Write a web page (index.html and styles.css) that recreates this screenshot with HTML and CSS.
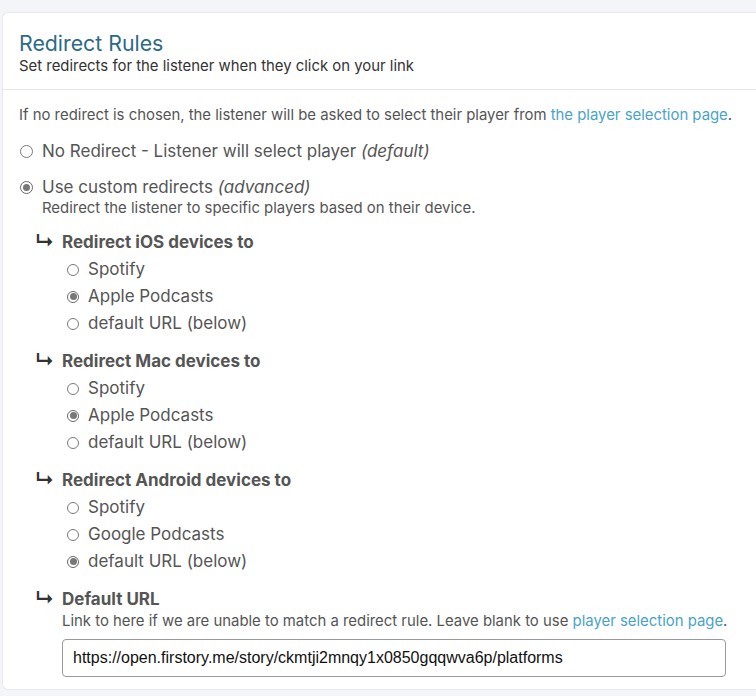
FILE: index.html
```html
<!DOCTYPE html>
<html lang="en">
<head>
<meta charset="UTF-8">
<meta name="viewport" content="width=device-width, initial-scale=1.0">
<title>Redirect Rules</title>
<link rel="stylesheet" href="styles.css">
</head>
<body>

<div class="card">
    <div class="card-head">
        <h2>Redirect Rules</h2>
        <p>Set redirects for the listener when they click on your link</p>
    </div>
    <div class="card-body">
        <p class="note">If no redirect is chosen, the listener will be asked to select their player from <a href="#">the player selection page</a>.</p>

        <label class="opt">
            <input type="radio" name="mode">
            <span>No Redirect - Listener will select player <em>(default)</em></span>
        </label>

        <label class="opt">
            <input type="radio" name="mode" checked>
            <span>Use custom redirects <em>(advanced)</em></span>
        </label>
        <p class="desc">Redirect the listener to specific players based on their device.</p>

        <div class="rule">
            <h3><span class="arrow">&#8627;</span>Redirect iOS devices to</h3>
            <label class="sub"><input type="radio" name="ios"> Spotify</label>
            <label class="sub"><input type="radio" name="ios" checked> Apple Podcasts</label>
            <label class="sub"><input type="radio" name="ios"> default URL (below)</label>
        </div>

        <div class="rule">
            <h3><span class="arrow">&#8627;</span>Redirect Mac devices to</h3>
            <label class="sub"><input type="radio" name="mac"> Spotify</label>
            <label class="sub"><input type="radio" name="mac" checked> Apple Podcasts</label>
            <label class="sub"><input type="radio" name="mac"> default URL (below)</label>
        </div>

        <div class="rule">
            <h3><span class="arrow">&#8627;</span>Redirect Android devices to</h3>
            <label class="sub"><input type="radio" name="android"> Spotify</label>
            <label class="sub"><input type="radio" name="android"> Google Podcasts</label>
            <label class="sub"><input type="radio" name="android" checked> default URL (below)</label>
        </div>

        <div class="rule">
            <h3><span class="arrow">&#8627;</span>Default URL</h3>
            <p class="hint">Link to here if we are unable to match a redirect rule. Leave blank to use <a href="#">player selection page</a>.</p>
            <input type="text" class="url" value="https://open.firstory.me/story/ckmtji2mnqy1x0850gqqwva6p/platforms">
        </div>
    </div>
</div>

</body>
</html>
```

FILE: styles.css
```css
body {
    font-family: Inter, "Noto Sans", sans-serif;
    margin: 0;
    padding: 12px 0 0 2px;
    background-color: #f4f5f9;
    color: #555;
}
.card {
    background-color: #fff;
    border: 1px solid #e8e9ee;
    border-right: none;
    border-radius: 6px 0 0 6px;
    height: 678px;
    box-sizing: border-box;
}
.card-head {
    padding: 16px 16px 14px;
    border-bottom: 1px solid #e6e6e6;
}
.card-head h2 {
    margin: 0;
    font-size: 21.3px;
    font-weight: 400;
    color: #2d6a84;
    line-height: 28px;
}
.card-head p {
    margin: 0;
    font-size: 14.9px;
    color: #333;
    line-height: 18px;
}
.card-body {
    padding: 14px 16px;
}
a {
    color: #4aa3c8;
    text-decoration: none;
}
.note {
    margin: 0;
    font-size: 14.9px;
    line-height: 22px;
}
.opt {
    display: flex;
    align-items: center;
    font-size: 17px;
    line-height: 22px;
    margin-top: 14px;
}
input[type="radio"] {
    appearance: none;
    box-sizing: border-box;
    border: 1px solid #7a7a7a;
    border-radius: 50%;
    background-color: #fff;
    display: grid;
    place-content: center;
    flex-shrink: 0;
}
input[type="radio"]:checked {
    border-color: #6a6a6a;
}
input[type="radio"]:checked::before {
    content: "";
    width: 7px;
    height: 7px;
    border-radius: 50%;
    background-color: #777;
}
.opt input {
    margin: 0 9px 0 1px;
    width: 13px;
    height: 13px;
}
.desc {
    margin: 0 0 0 23px;
    font-size: 14.9px;
    line-height: 20px;
}
.rule {
    margin: 10px 0 0 16px;
}
.rule h3 {
    margin: 0;
    font-size: 17px;
    font-weight: 700;
    line-height: 28px;
    display: flex;
    align-items: center;
}
.arrow {
    width: 27px;
    font-weight: 700;
    color: #333;
    font-size: 19px;
}
.sub {
    display: flex;
    align-items: center;
    margin-left: 31px;
    font-size: 17px;
    line-height: 27px;
}
.sub input {
    margin: 0 9px 0 1px;
    width: 12px;
    height: 12px;
}
.hint {
    margin: -2px 0 0 27px;
    font-size: 14.9px;
    line-height: 20px;
}
.url {
    margin: 8px 0 0 27px;
    width: 664px;
    height: 38px;
    box-sizing: border-box;
    border: 1px solid #999;
    border-radius: 4px;
    padding: 0 10px;
    font-family: "Liberation Sans", Arial, sans-serif;
    font-size: 16px;
    color: #111;
}
```
